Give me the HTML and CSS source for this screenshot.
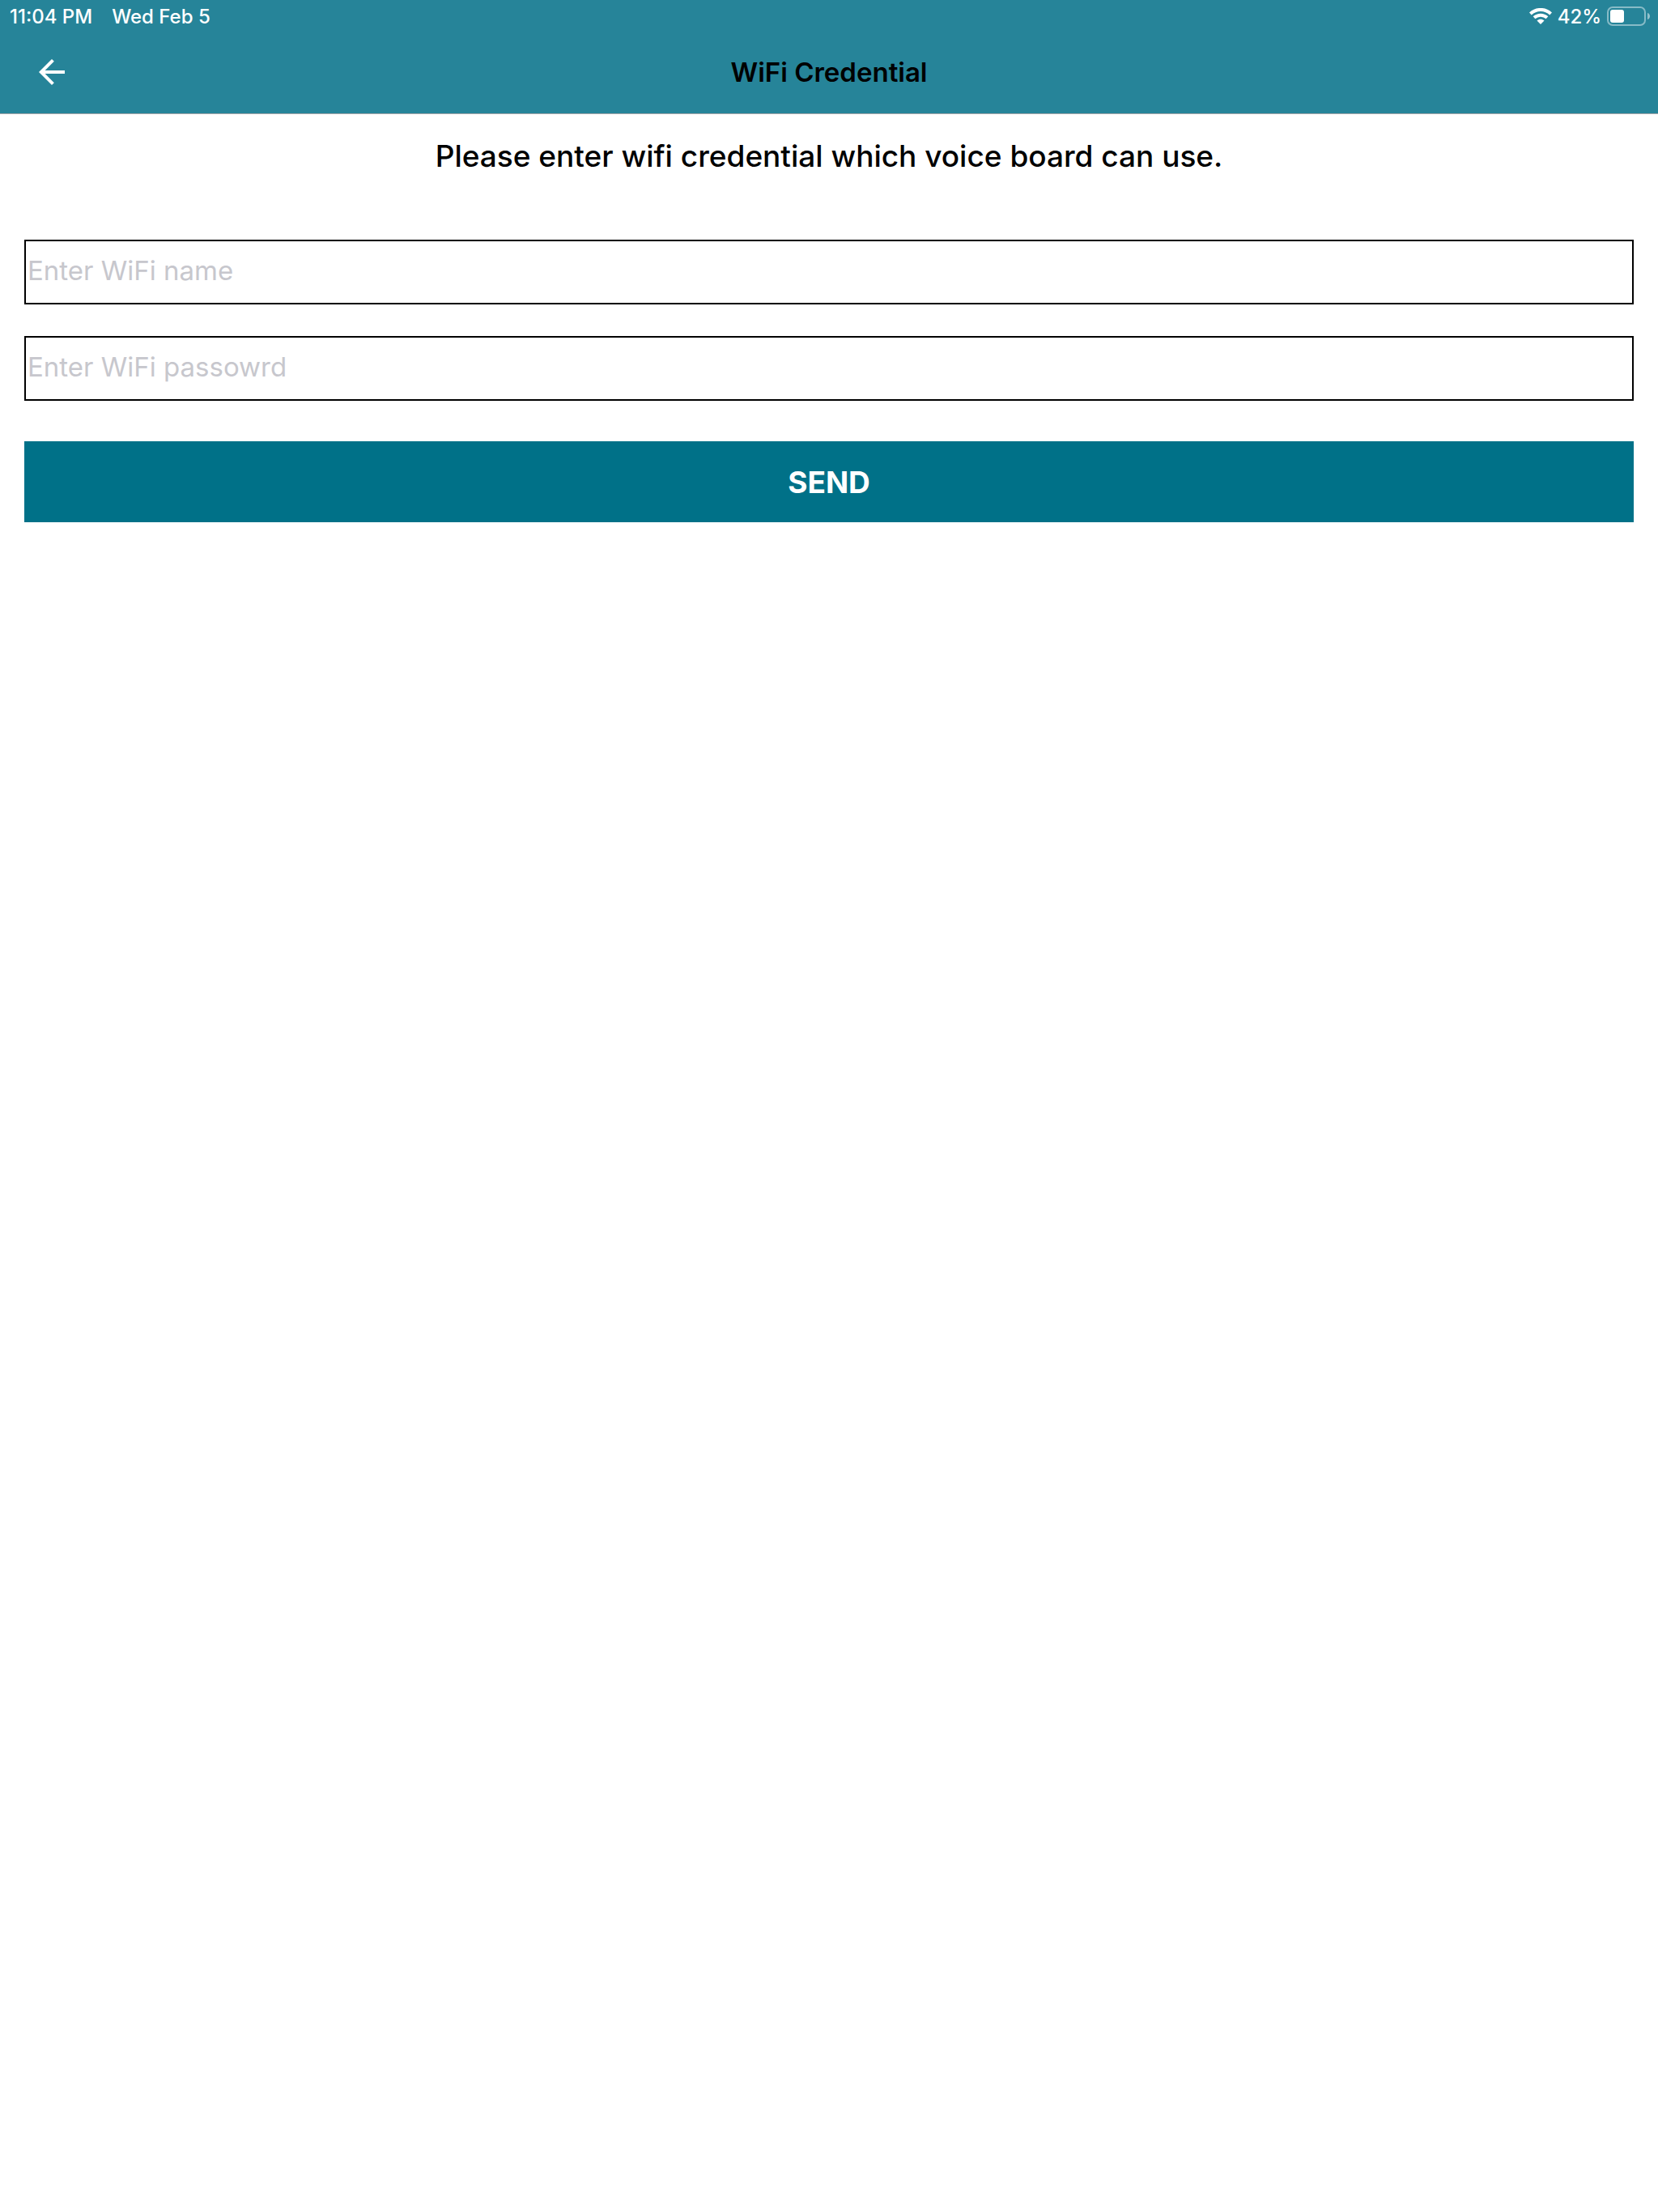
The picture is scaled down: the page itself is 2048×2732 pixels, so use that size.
FILE: index.html
```html
<!DOCTYPE html>
<html lang="en">
<head>
    <meta charset="UTF-8">
    <meta name="viewport" content="width=device-width, initial-scale=1.0">
    <title>WiFi Credential</title>
    <link rel="stylesheet" href="styles.css">
</head>
<body>
    <header class="header">
        <div class="status-bar">
            <div class="status-left">
                <span>11:04 PM</span>
                <span>Wed Feb 5</span>
            </div>
            <div class="status-right">
                <svg class="wifi-icon" viewBox="0 0 28 20" aria-hidden="true">
                    <path d="M1.4 7C8.6 .2 19.4 .2 26.6 7" fill="none" stroke="#fff" stroke-width="4"/>
                    <path d="M6 11.8C10.7 7.6 17.3 7.6 22 11.8" fill="none" stroke="#fff" stroke-width="4"/>
                    <path d="M9.5 15.6C12.2 13.1 15.8 13.1 18.5 15.6L14 20Z" fill="#fff"/>
                </svg>
                <span>42%</span>
                <svg class="battery-icon" viewBox="0 0 54 24" aria-hidden="true">
                    <rect x="1" y="1" width="46" height="22" rx="6" fill="none" stroke="#fff" stroke-opacity=".45" stroke-width="2"/>
                    <rect x="4" y="4" width="17" height="16" rx="3" fill="#fff"/>
                    <path d="M50 8C54 9 54 15 50 16Z" fill="#fff" fill-opacity=".5"/>
                </svg>
            </div>
        </div>
        <div class="nav-bar">
            <a class="back" href="#" aria-label="Back">
                <svg viewBox="0 0 24 24" aria-hidden="true">
                    <path d="M20 11H7.83l5.59-5.59L12 4l-8 8 8 8 1.41-1.41L7.83 13H20v-2z" fill="#fff"/>
                </svg>
            </a>
            <h1>WiFi Credential</h1>
        </div>
    </header>

    <main class="container">
        <p class="message">Please enter wifi credential which voice board can use.</p>
        <form class="wifi-form">
            <input type="text" name="ssid" placeholder="Enter WiFi name" aria-label="WiFi name">
            <input type="password" name="password" placeholder="Enter WiFi passowrd" aria-label="WiFi password">
            <button type="button">SEND</button>
        </form>
    </main>
</body>
</html>
```
FILE: styles.css
```css
* {
    box-sizing: border-box;
}
body {
    margin: 0;
    font-family: Inter, "Liberation Sans", sans-serif;
    background-color: #fff;
    color: #000;
}
.header {
    background-color: #268499;
    border-bottom: 1px solid #a7a7aa;
}
.status-bar {
    display: flex;
    justify-content: space-between;
    align-items: center;
    height: 40px;
    padding: 0 9px 0 12px;
    color: #fff;
    font-size: 24px;
    font-weight: 500;
}
.status-left {
    display: flex;
    gap: 24px;
}
.status-right {
    display: flex;
    align-items: center;
    gap: 7px;
}
.wifi-icon {
    width: 28px;
    height: 20px;
}
.battery-icon {
    width: 54px;
    height: 24px;
}
.nav-bar {
    display: grid;
    grid-template-columns: 1fr auto 1fr;
    align-items: center;
    height: 100px;
    padding: 0 40px 2px;
}
.back svg {
    display: block;
    width: 48px;
    height: 48px;
}
.nav-bar h1 {
    margin: 0;
    font-size: 33px;
    font-weight: 600;
}
.container {
    padding: 30px;
}
.message {
    margin: 0 0 81px;
    font-size: 37px;
    font-weight: 500;
    line-height: 44px;
    text-align: center;
}
.wifi-form {
    display: flex;
    flex-direction: column;
}
.wifi-form input {
    height: 80px;
    margin-bottom: 39px;
    padding: 0 2px 4px;
    border: 2px solid #000;
    border-radius: 0;
    font-family: inherit;
    font-size: 33px;
}
.wifi-form input::placeholder {
    color: #c7c7cd;
}
.wifi-form button {
    height: 100px;
    margin-top: 11px;
    border: none;
    background-color: #007188;
    color: #fff;
    font-family: inherit;
    font-size: 37px;
    font-weight: 700;
    cursor: pointer;
}
```
